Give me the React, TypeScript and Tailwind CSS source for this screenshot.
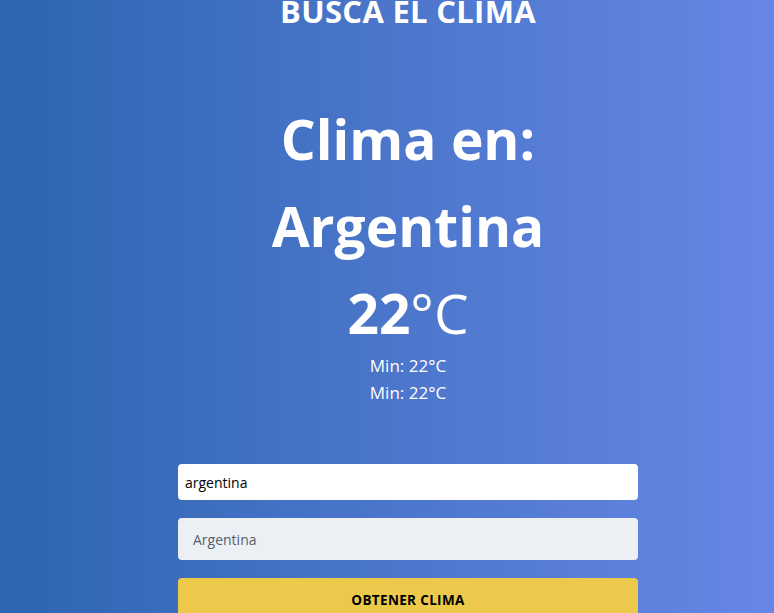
export default function App() {
  return (
    <div
      className="min-h-screen w-full bg-gradient-to-r from-[#2c65b0] to-[#6787e6] flex justify-center pl-[42px] text-white"
      style={{ fontFamily: '"Open Sans", "Noto Sans", sans-serif' }}
    >
      <div className="w-[460px] flex flex-col items-center">
        <h2 className="text-[31px] font-bold leading-[32px] uppercase tracking-[0.3px] -mt-[5px]">Busca el clima</h2>

        <div className="mt-[68px] flex flex-col items-center">
          <h1 className="text-[55px] font-bold leading-[87px] text-center">
            Clima en:
            <br />
            Argentina
          </h1>
          <p className="text-[55px] leading-[87px]">
            <span className="font-bold">22</span>°C
          </p>
          <p className="text-[17px] leading-[27px] -mt-[4px]">Min: 22°C</p>
          <p className="text-[17px] leading-[27px]">Min: 22°C</p>
        </div>

        <form className="w-full mt-[58px] flex flex-col">
          <input
            type="text"
            defaultValue="argentina"
            className="w-full h-[36px] bg-white rounded-[4px] px-[7px] text-[14px] text-black outline-none"
          />
          <input
            type="text"
            placeholder="Argentina"
            className="w-full h-[42px] mt-[18px] bg-[#ecf0f4] rounded-[4px] px-[15px] text-[14px] text-[#4a5568] placeholder:text-[#555f6d] outline-none"
          />
          <button
            type="button"
            className="w-full h-[44px] mt-[18px] bg-[#ecc94b] rounded-[4px] text-[13.5px] font-bold uppercase text-black tracking-wide"
          >
            Obtener clima
          </button>
        </form>
      </div>
    </div>
  );
}
